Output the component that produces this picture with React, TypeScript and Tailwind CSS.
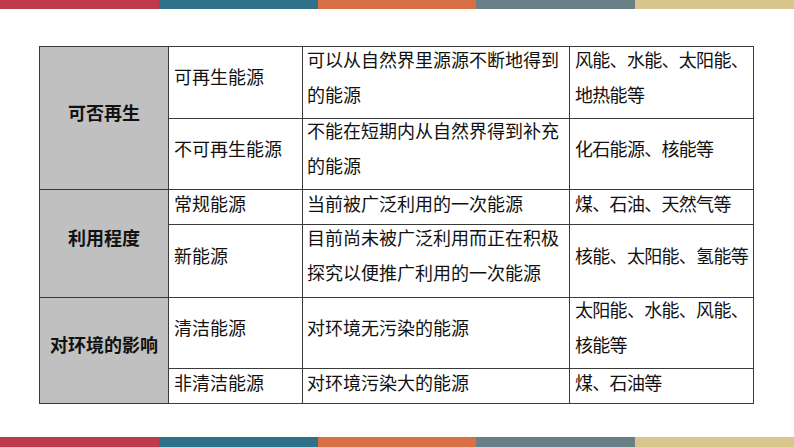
import React from "react";

const bars = ["bg-[#bf3a4d]", "bg-[#2e7189]", "bg-[#d96f47]", "bg-[#688086]", "bg-[#d7c78d]"];

function Bar({ h }: { h: string }) {
  return (
    <div className={`flex w-full ${h}`}>
      {bars.map((c) => (
        <div key={c} className={`flex-1 ${c}`} />
      ))}
    </div>
  );
}

function Head({ text, span }: { text: string; span: string }) {
  return (
    <div
      className={`${span} bg-[#c0c0c0] flex items-center justify-center pb-3 font-bold text-[18px] leading-[35px] text-[#111]`}
    >
      {text}
    </div>
  );
}

function Cell({
  lines,
  pad,
  pl,
  tight,
}: {
  lines: string[];
  pad: string;
  pl: string;
  tight?: boolean;
}) {
  return (
    <div className={`bg-white flex items-center ${pad} ${pl} overflow-visible`}>
      <div
        className={`text-[18px] leading-[35px] text-[#111] whitespace-nowrap ${
          tight ? "tracking-[-0.7px]" : ""
        }`}
      >
        {lines.map((l, i) => (
          <div key={i}>{l}</div>
        ))}
      </div>
    </div>
  );
}

export default function App() {
  return (
    <div
      className="w-[794px] h-[447px] bg-white flex flex-col overflow-hidden"
      style={{ fontFamily: '"Noto Sans CJK SC", "Noto Sans", sans-serif' }}
    >
      <Bar h="h-[9px]" />
      <div className="flex-1 pt-[37px] pl-[39px]">
        <div className="grid grid-cols-[128px_133px_266px_183px] grid-rows-[71px_70px_34px_72px_70px_34px] gap-px p-px bg-[#3a3a3a] w-[715px]">
          <Head text="可否再生" span="row-span-2" />
          <Cell lines={["可再生能源"]} pad="pb-3" pl="pl-[5px]" />
          <Cell lines={["可以从自然界里源源不断地得到", "的能源"]} pad="pb-3" pl="pl-[4px]" />
          <Cell lines={["风能、水能、太阳能、", "地热能等"]} pad="pb-3" pl="pl-[5px]" tight />

          <Cell lines={["不可再生能源"]} pad="pb-3" pl="pl-[5px]" />
          <Cell lines={["不能在短期内从自然界得到补充", "的能源"]} pad="pb-3" pl="pl-[4px]" />
          <Cell lines={["化石能源、核能等"]} pad="pb-3" pl="pl-[5px]" tight />

          <Head text="利用程度" span="row-span-2" />
          <Cell lines={["常规能源"]} pad="pb-2" pl="pl-[5px]" />
          <Cell lines={["当前被广泛利用的一次能源"]} pad="pb-2" pl="pl-[4px]" />
          <Cell lines={["煤、石油、天然气等"]} pad="pb-2" pl="pl-[5px]" tight />

          <Cell lines={["新能源"]} pad="pb-3" pl="pl-[5px]" />
          <Cell lines={["目前尚未被广泛利用而正在积极", "探究以便推广利用的一次能源"]} pad="pb-3" pl="pl-[4px]" />
          <Cell lines={["核能、太阳能、氢能等"]} pad="pb-3" pl="pl-[5px]" tight />

          <Head text="对环境的影响" span="row-span-2" />
          <Cell lines={["清洁能源"]} pad="pb-3" pl="pl-[5px]" />
          <Cell lines={["对环境无污染的能源"]} pad="pb-3" pl="pl-[4px]" />
          <Cell lines={["太阳能、水能、风能、", "核能等"]} pad="pb-3" pl="pl-[5px]" tight />

          <Cell lines={["非清洁能源"]} pad="pb-2" pl="pl-[5px]" />
          <Cell lines={["对环境污染大的能源"]} pad="pb-2" pl="pl-[4px]" />
          <Cell lines={["煤、石油等"]} pad="pb-2" pl="pl-[5px]" tight />
        </div>
      </div>
      <Bar h="h-[10px]" />
    </div>
  );
}
